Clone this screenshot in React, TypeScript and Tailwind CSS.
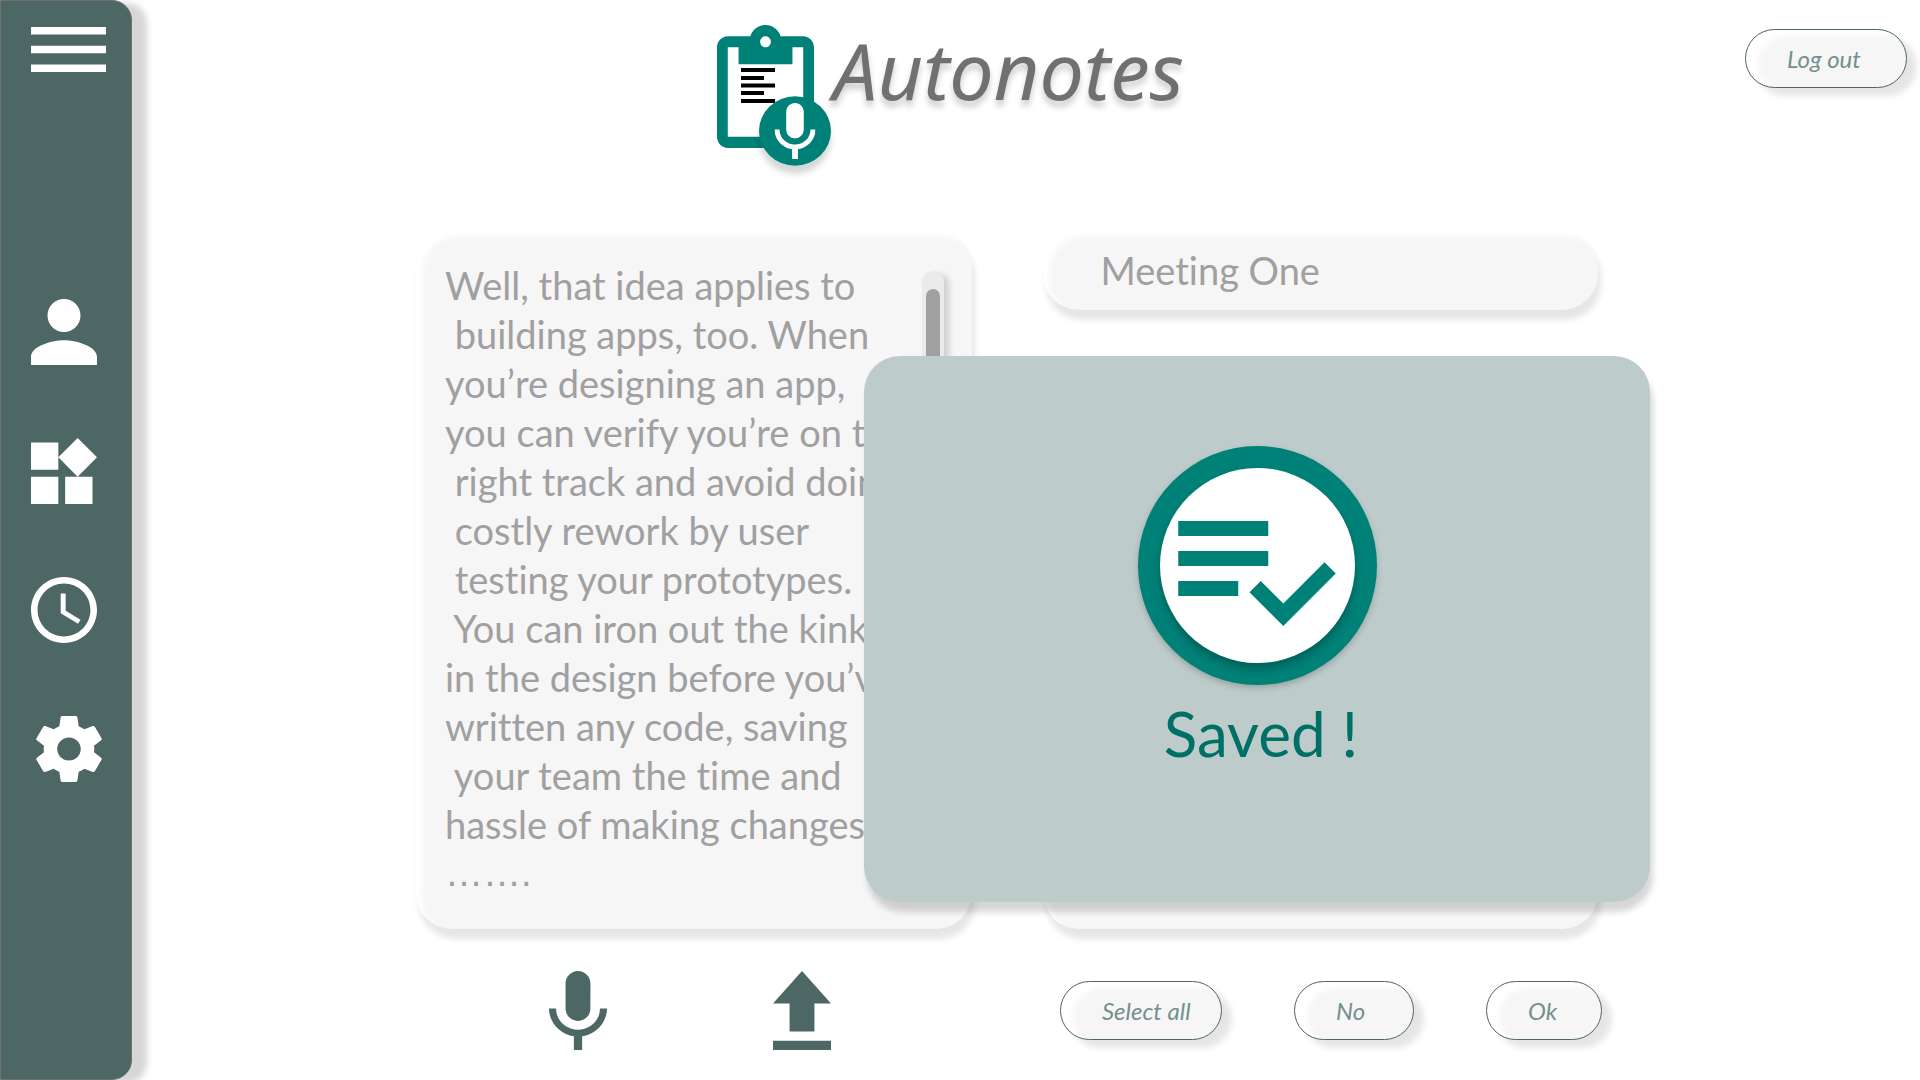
import React from "react";

const MIC_PATH =
  "M12 15c1.66 0 2.99-1.34 2.99-3L15 6c0-1.66-1.34-3-3-3S9 4.34 9 6v6c0 1.66 1.34 3 3 3zm5.3-3c0 3-2.54 5.1-5.3 5.1S6.7 15 6.7 12H5c0 3.42 2.72 6.23 6 6.72V22h2v-3.28c3.28-.48 6-3.3 6-6.72h-1.7z";

const NAV_ITEMS = [
  {
    label: "Profile",
    viewBox: "4 4 16 16",
    path: "M12 12c2.21 0 4-1.79 4-4s-1.79-4-4-4-4 1.79-4 4 1.79 4 4 4zm0 2c-2.67 0-8 1.34-8 4v2h16v-2c0-2.66-5.33-4-8-4z",
  },
  {
    label: "Widgets",
    viewBox: "3 1.69 19.32 19.31",
    path: "M13 13v8h8v-8h-8zM3 21h8v-8H3v8zM3 3v8h8V3H3zm13.66-1.31L11 7.34 16.66 13l5.66-5.66-5.66-5.65z",
  },
  {
    label: "History",
    viewBox: "2 2 20 20",
    path: "M11.99 2C6.47 2 2 6.48 2 12s4.47 10 9.99 10C17.52 22 22 17.52 22 12S17.52 2 11.99 2zM12 20c-4.42 0-8-3.58-8-8s3.58-8 8-8 8 3.58 8 8-3.58 8-8 8zm.5-13H11v6l5.25 3.15.75-1.23-4.5-2.67z",
  },
  {
    label: "Settings",
    viewBox: "2.2 2 19.6 20",
    path: "M19.43 12.98c.04-.32.07-.64.07-.98s-.03-.66-.07-.98l2.11-1.65c.19-.15.24-.42.12-.64l-2-3.46c-.12-.22-.39-.3-.61-.22l-2.49 1c-.52-.4-1.08-.73-1.69-.98l-.38-2.65C14.46 2.18 14.25 2 14 2h-4c-.25 0-.46.18-.49.42l-.38 2.65c-.61.25-1.17.59-1.69.98l-2.49-1c-.23-.09-.49 0-.61.22l-2 3.46c-.13.22-.07.49.12.64l2.11 1.65c-.04.32-.07.65-.07.98s.03.66.07.98l-2.11 1.65c-.19.15-.24.42-.12.64l2 3.46c.12.22.39.3.61.22l2.49-1c.52.4 1.08.73 1.69.98l.38 2.65c.03.24.24.42.49.42h4c.25 0 .46-.18.49-.42l.38-2.65c.61-.25 1.17-.59 1.69-.98l2.49 1c.23.09.49 0 .61-.22l2-3.46c.12-.22.07-.49-.12-.64l-2.11-1.65zM12 15.5c-1.93 0-3.5-1.57-3.5-3.5s1.57-3.5 3.5-3.5 3.5 1.57 3.5 3.5-1.57 3.5-3.5 3.5z",
  },
];

const NOTE_LINES = [
  "Well, that idea applies to",
  " building apps, too. When",
  "you’re designing an app,",
  "you can verify you’re on the",
  " right track and avoid doing",
  " costly rework by user",
  " testing your prototypes.",
  " You can iron out the kinks",
  "in the design before you’ve",
  "written any code, saving",
  " your team the time and",
  "hassle of making changes",
];

const CARD =
  "bg-[#f6f6f6] shadow-[3px_10px_6px_rgba(0,0,0,0.1),inset_6px_6px_6px_#ffffff]";

function PillButton({ children, width }: { children: React.ReactNode; width: string }) {
  return (
    <button
      type="button"
      className={
        "h-[59px] shrink-0 rounded-[30px] border border-[#4c6764] bg-[#f6f6f6] pl-[41px] text-left text-2xl whitespace-nowrap text-[#74908d] italic shadow-[10px_8px_6px_rgba(0,0,0,0.1),inset_12px_6px_6px_#ffffff] " +
        width
      }
    >
      {children}
    </button>
  );
}

function Sidebar() {
  return (
    <aside className="relative w-[132px] shrink-0 rounded-r-[20px] border border-[#707070] bg-[#4c6764] pt-[26px] pl-[30px] text-white shadow-[15px_3px_6px_rgba(0,0,0,0.16)]">
      <button type="button" aria-label="Menu" className="block">
        <svg viewBox="3 6 18 12" preserveAspectRatio="none" className="block h-[45px] w-[75px]" fill="currentColor">
          <path d="M3 18h18v-2H3v2zm0-5h18v-2H3v2zm0-7v2h18V6H3z" />
        </svg>
      </button>
      <nav className="mt-[227px] flex flex-col gap-[73px]">
        {NAV_ITEMS.map((item) => (
          <a key={item.label} href="#" aria-label={item.label} className="block last:ml-[5px]">
            <svg viewBox={item.viewBox} preserveAspectRatio="none" className="block size-[66px]" fill="currentColor">
              <path d={item.path} />
            </svg>
          </a>
        ))}
      </nav>
    </aside>
  );
}

function Logo() {
  return (
    <svg viewBox="0 0 120 150" className="h-[150px] w-[120px] shrink-0 overflow-visible" aria-hidden="true">
      <defs>
        <filter id="badge-shadow" x="-30%" y="-30%" width="160%" height="170%">
          <feDropShadow dx="0" dy="8" stdDeviation="3" floodOpacity="0.16" />
        </filter>
      </defs>
      <svg x="0" y="5" width="97" height="123" viewBox="3 0 18 22" preserveAspectRatio="none">
        <path
          fill="#008177"
          d="M19 2h-4.18C14.4.84 13.3 0 12 0c-1.3 0-2.4.84-2.82 2H5c-1.1 0-2 .9-2 2v16c0 1.1.9 2 2 2h14c1.1 0 2-.9 2-2V4c0-1.1-.9-2-2-2zm-7 0c.55 0 1 .45 1 1s-.45 1-1 1-1-.45-1-1 .45-1 1-1zm7 18H5V4h2v3h10V4h2v16z"
        />
      </svg>
      <path d="M24 48h34v4H24zM24 56h23v4H24zM24 63.500h34v4H24zM24 71h23v4H24zM24 79h34v4H24z" fill="#000" />
      <ellipse cx="78" cy="111" rx="36" ry="34.700" fill="#008177" filter="url(#badge-shadow)" />
      <svg x="57.500" y="83" width="41" height="56" viewBox="5 3 14 19" preserveAspectRatio="none">
        <path fill="#fff" d={MIC_PATH} />
      </svg>
    </svg>
  );
}

function SavedDialog() {
  return (
    <div
      role="dialog"
      aria-label="Saved"
      className="absolute top-[126px] -right-[52px] left-[448px] flex h-[546px] flex-col items-center rounded-[36px] bg-[#bdcccb] pt-[90px] shadow-[3px_10px_6px_rgba(0,0,0,0.16)]"
    >
      <div className="flex size-[239px] items-center justify-center rounded-full bg-[#008177] shadow-[0_3px_6px_rgba(0,0,0,0.2)]">
        <div className="flex size-[195px] items-center justify-center rounded-full bg-white shadow-[0_6px_8px_rgba(0,0,0,0.25)]">
          <svg viewBox="2 6 21 14" className="mt-4 h-[105px] w-[158px]" fill="#008177">
            <path d="M14 10H2v2h12v-2zm0-4H2v2h12V6zM2 16h8v-2H2v2zm19.500-4.500L23 13l-6.990 7-4.510-4.500L13 14l3.010 3 5.490-5.500z" />
          </svg>
        </div>
      </div>
      <p className="mt-3 pl-2 text-[62px] leading-[72px] text-[#006f66]">Saved !</p>
    </div>
  );
}

export default function App() {
  return (
    <div className="flex min-h-screen overflow-hidden bg-white font-['Lato',sans-serif] [font-variant-ligatures:none]">
      <Sidebar />
      <main className="flex min-w-0 flex-1 flex-col">
        <header className="flex items-start pt-5 pr-[13px] pl-[585px]">
          <Logo />
          <h1 className="-ml-1 font-['Noto_Sans',sans-serif] text-[79px] leading-[100px] text-[#707070] italic [text-shadow:0_6px_6px_rgba(0,0,0,0.2)]">
            Autonotes
          </h1>
          <div className="mt-[9px] ml-auto flex">
            <PillButton width="w-[162px]">Log out</PillButton>
          </div>
        </header>

        <div className="relative mt-[60px] mr-[322px] ml-[284px] grid grid-cols-2 gap-[71px] text-[38px] text-[#a0a0a0]">
          <section className={"flex h-[699px] justify-between rounded-[36px] pt-[31px] pr-7 pl-[29px] " + CARD}>
            <div className="w-0 leading-[49px] whitespace-pre">
              <p>{NOTE_LINES.join("\n")}</p>
              <p className="font-['Liberation_Sans',sans-serif]">…….</p>
            </div>
            <div className="mt-[10px] h-[620px] w-[22px] shrink-0 rounded-full bg-[#ebebeb] px-1 pt-[18px] shadow-[5px_3px_6px_rgba(0,0,0,0.16)]">
              <div className="h-40 w-[14px] rounded-full bg-[#a0a0a0]" />
            </div>
          </section>
          <div className="flex flex-col gap-[60px]">
            <input
              type="text"
              aria-label="Title"
              defaultValue="Meeting One"
              className={"h-20 w-full rounded-[36px] pr-8 pl-[58px] outline-none " + CARD}
            />
            <textarea aria-label="Summary" className={"w-full flex-1 resize-none rounded-[36px] p-8 outline-none " + CARD} />
          </div>
          <SavedDialog />
        </div>

        <footer className="mt-[42px] mr-[318px] ml-[284px] flex items-start text-[#4c6764]">
          <button type="button" aria-label="Record" className="ml-[133px]">
            <svg viewBox="5 3 14 19" preserveAspectRatio="none" className="block h-[79px] w-[58px]" fill="currentColor">
              <path d={MIC_PATH} />
            </svg>
          </button>
          <button type="button" aria-label="Upload" className="ml-[166px]">
            <svg viewBox="5 3 14 17" preserveAspectRatio="none" className="block h-[79px] w-[58px]" fill="currentColor">
              <path d="M9 16h6v-6h4l-7-7-7 7h4zm-4 2h14v2H5z" />
            </svg>
          </button>
          <div className="mt-[10px] ml-auto flex gap-[72px]">
            <PillButton width="w-[162px]">Select all</PillButton>
            <PillButton width="w-[120px]">No</PillButton>
            <PillButton width="w-[116px]">Ok</PillButton>
          </div>
        </footer>
      </main>
    </div>
  );
}
